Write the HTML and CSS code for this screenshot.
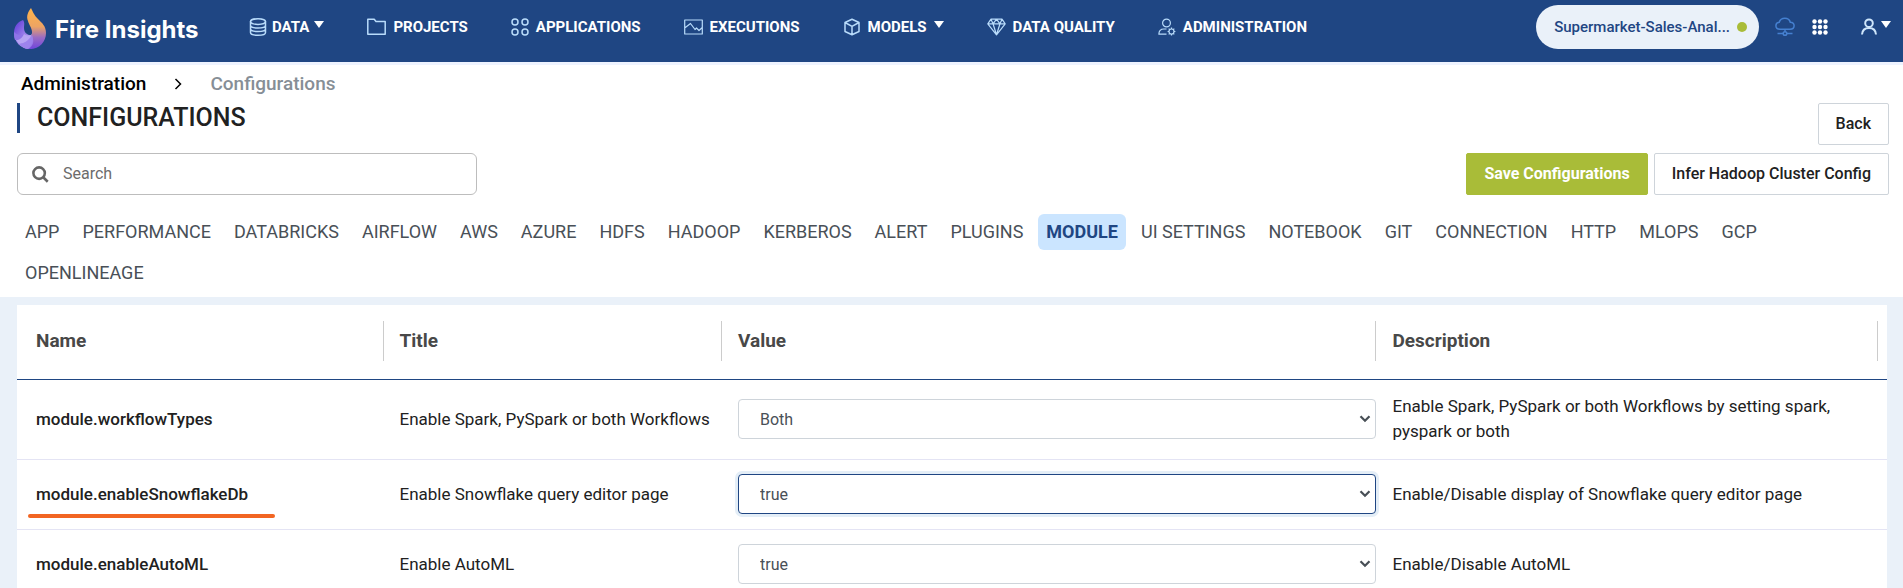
FILE: index.html
```html
<!DOCTYPE html>
<html lang="en">
<head>
<meta charset="utf-8">
<title>Fire Insights - Configurations</title>
<link rel="stylesheet" href="styles.css">
</head>
<body>
<header class="topbar">
  <a class="brand" href="#">
    <svg class="brand-logo" width="34" height="42" viewBox="0 0 34 42" aria-hidden="true">
      <defs>
        <linearGradient id="flame" x1="0" y1="0" x2="0" y2="1">
          <stop offset="0" stop-color="#ffb44a"/>
          <stop offset=".45" stop-color="#eda463"/>
          <stop offset=".72" stop-color="#9a6bc4"/>
          <stop offset="1" stop-color="#6f45dc"/>
        </linearGradient>
        <linearGradient id="swirl" x1="0" y1="0" x2="1" y2="1">
          <stop offset="0" stop-color="#5a35d8"/>
          <stop offset=".6" stop-color="#a98fee"/>
          <stop offset="1" stop-color="#8d6be6"/>
        </linearGradient>
      </defs>
      <path d="M10 12C4 14 1 19 1 25c0 9 7 16 16 16 3 0 5-3 5-9l-2-5c-5 1-9-2-9-7 0-3 1-5-1-8z" fill="url(#swirl)"/>
      <path d="M18 0c-3 4-5 8-3 13 1 4 4 7 4 11 0 1 0 2-1 3l2 4c1 4-1 8-5 10 11 1 18-7 18-16 0-7-4-10-8-14-4-4-5-7-7-11z" fill="url(#flame)"/>
      <path d="M1 24c3 3 6 4 10 2-2 4-5 6-9 6-1-2-1-5-1-8z" fill="#8f74e8"/>
      <path d="M11 26c3 2 6 2 8 0-2 5-6 9-13 10l-3-4c4 0 6-2 8-6z" fill="#b7a4f3"/>
      <path d="M19 27c2 4 0 10-4 14-3 0-6-2-9-5 7-1 11-4 13-9z" fill="#9d83ec"/>
    </svg>
    <span class="brand-name">Fire Insights</span>
  </a>
  <nav class="nav" aria-label="Main">
    <a class="nav-item snug" href="#">
      <svg class="nav-icon" width="18" height="18" viewBox="0 0 18 18"><ellipse cx="9" cy="3.6" rx="7.5" ry="2.8"/><path d="M1.500 3.600v10.800c0 1.600 3.400 2.800 7.500 2.800s7.500-1.200 7.500-2.800V3.600M1.500 7.200c0 1.600 3.400 2.800 7.500 2.800s7.500-1.200 7.500-2.800M1.500 10.800c0 1.600 3.400 2.800 7.500 2.800s7.500-1.200 7.500-2.800"/></svg>
      <span>DATA</span><span class="caret"></span>
    </a>
    <a class="nav-item" href="#">
      <svg class="nav-icon" width="19" height="18" viewBox="0 0 19 18"><path d="M.8 16.200V1.200h6.400l1.800 2.300h9.200v12.700z"/></svg>
      <span>PROJECTS</span>
    </a>
    <a class="nav-item" href="#">
      <svg class="nav-icon" width="18" height="18" viewBox="0 0 18 18"><circle cx="4" cy="4" r="3"/><circle cx="14" cy="4" r="3"/><circle cx="4" cy="14" r="3"/><circle cx="14" cy="14" r="3"/></svg>
      <span>APPLICATIONS</span>
    </a>
    <a class="nav-item" href="#">
      <svg class="nav-icon thin" width="19" height="16" viewBox="0 0 19 16"><path d="M.7 1h17.600v14H.7zM.7 9l5.800-4.500 4.500 6 1.500-1.500 2.500 2.500 3.300-3"/></svg>
      <span>EXECUTIONS</span>
    </a>
    <a class="nav-item" href="#">
      <svg class="nav-icon" width="18" height="18" viewBox="0 0 18 18"><path d="M9 1.200l7 3.300v9L9 16.800l-7-3.300v-9zM2 4.500l7 3.800 7-3.800M9 8.300v8.500"/></svg>
      <span>MODELS</span><span class="caret"></span>
    </a>
    <a class="nav-item" href="#">
      <svg class="nav-icon thin" width="19" height="18" viewBox="0 0 19 18"><path d="M4 1.200h11l3.200 4.600-8.700 11L.8 5.800zM.8 5.800h17.400M6 5.800l3.500 11 3.500-11-3.500-4.600zM4 1.200l2 4.600M15 1.200l-2 4.600"/></svg>
      <span>DATA QUALITY</span>
    </a>
    <a class="nav-item" href="#">
      <svg class="nav-icon thin" width="18" height="18" viewBox="0 0 18 18"><circle cx="8.500" cy="5" r="3.900"/><path d="M8.500 16.200H.9c0-3 1.500-5.200 5-5.200h2.600"/><circle cx="13.500" cy="13.500" r="2.500"/><path d="M13.500 9.600V11M13.500 16v1.400M9.600 13.500H11M16 13.500h1.400M10.700 10.700l1 1M15.300 15.300l1 1M16.300 10.700l-1 1M11.700 15.300l-1 1"/></svg>
      <span>ADMINISTRATION</span>
    </a>
  </nav>
  <div class="tools">
    <button class="project" type="button"><span>Supermarket-Sales-Anal...</span><span class="status"></span></button>
    <button class="tool cloud" type="button" aria-label="Connection">
      <svg width="20" height="20" viewBox="0 0 20 20"><path d="M5 12.200C2.500 12.200.9 10.700.9 8.700c0-2 1.500-3.300 3.300-3.500C5 2.700 7.100 1.200 9.800 1.200c2.800 0 4.900 1.600 5.500 4 2.200.1 3.800 1.500 3.800 3.500s-1.600 3.500-4.100 3.500zM10 12.200v2.600M2.500 16.500h5.800M11.700 16.500h5.800"/><circle cx="10" cy="16.500" r="1.800"/></svg>
    </button>
    <button class="tool grid" type="button" aria-label="Apps">
      <svg width="16" height="16" viewBox="0 0 16 16"><circle cx="2.500" cy="2.500" r="2.200"/><circle cx="8" cy="2.500" r="2.200"/><circle cx="13.500" cy="2.500" r="2.200"/><circle cx="2.500" cy="8" r="2.200"/><circle cx="8" cy="8" r="2.200"/><circle cx="13.500" cy="8" r="2.200"/><circle cx="2.500" cy="13.500" r="2.200"/><circle cx="8" cy="13.500" r="2.200"/><circle cx="13.500" cy="13.500" r="2.200"/></svg>
    </button>
    <button class="tool user" type="button" aria-label="Account">
      <svg width="16" height="18" viewBox="0 0 16 18"><circle cx="8" cy="5.200" r="3.800"/><path d="M1 16.500c.3-4.200 3-6.500 7-6.500s6.700 2.300 7 6.500"/></svg>
      <span class="caret"></span>
    </button>
  </div>
</header>

<main class="page">
  <section class="head">
    <nav class="crumbs" aria-label="Breadcrumb">
      <a href="#">Administration</a>
      <svg width="8" height="12" viewBox="0 0 8 12" aria-hidden="true"><path d="M1.500 1l5 5-5 5"/></svg>
      <span>Configurations</span>
    </nav>
    <div class="title-row">
      <h1>CONFIGURATIONS</h1>
      <button class="btn" type="button">Back</button>
    </div>
    <div class="action-row">
      <label class="search">
        <svg width="17" height="17" viewBox="0 0 16 16" aria-hidden="true"><circle cx="6.700" cy="6.700" r="5.400"/><path d="M10.800 10.800l4 4"/></svg>
        <input type="search" placeholder="Search" aria-label="Search">
      </label>
      <div class="actions">
        <button class="btn primary" type="button">Save Configurations</button>
        <button class="btn" type="button">Infer Hadoop Cluster Config</button>
      </div>
    </div>
    <nav class="tabs" aria-label="Configuration groups">
      <a href="#">APP</a><a href="#">PERFORMANCE</a><a href="#">DATABRICKS</a><a href="#">AIRFLOW</a><a href="#">AWS</a><a href="#">AZURE</a><a href="#">HDFS</a><a href="#">HADOOP</a><a href="#">KERBEROS</a><a href="#">ALERT</a><a href="#">PLUGINS</a><a class="active" href="#" aria-current="page">MODULE</a><a href="#">UI SETTINGS</a><a href="#">NOTEBOOK</a><a href="#">GIT</a><a href="#">CONNECTION</a><a href="#">HTTP</a><a href="#">MLOPS</a><a href="#">GCP</a><a href="#">OPENLINEAGE</a>
    </nav>
  </section>

  <section class="content">
    <table class="config">
      <colgroup><col class="c-name"><col class="c-title"><col class="c-value"><col class="c-desc"></colgroup>
      <thead>
        <tr><th scope="col"><span>Name</span></th><th scope="col"><span>Title</span></th><th scope="col"><span>Value</span></th><th scope="col"><span>Description</span></th></tr>
      </thead>
      <tbody>
        <tr>
          <td><label for="wf">module.workflowTypes</label></td>
          <td>Enable Spark, PySpark or both Workflows</td>
          <td><select id="wf"><option>Both</option><option>Spark</option><option>PySpark</option></select></td>
          <td>Enable Spark, PySpark or both Workflows by setting spark, pyspark or both</td>
        </tr>
        <tr>
          <td><label class="marked" for="sf">module.enableSnowflakeDb</label></td>
          <td>Enable Snowflake query editor page</td>
          <td><select class="focused" id="sf"><option>true</option><option>false</option></select></td>
          <td>Enable/Disable display of Snowflake query editor page</td>
        </tr>
        <tr>
          <td><label for="ml">module.enableAutoML</label></td>
          <td>Enable AutoML</td>
          <td><select id="ml"><option>true</option><option>false</option></select></td>
          <td>Enable/Disable AutoML</td>
        </tr>
      </tbody>
    </table>
  </section>
</main>
</body>
</html>
```
FILE: styles.css
```css
* { box-sizing: border-box; }

body {
  margin: 0;
  height: 100vh;
  overflow: hidden;
  display: flex;
  flex-direction: column;
  font-family: Roboto, "Liberation Sans", sans-serif;
  font-size: 16px;
  line-height: 24px;
  color: #212121;
  background: #eaf1f9;
}

a { color: inherit; text-decoration: none; }
button, input, select { font: inherit; }
svg { flex: none; display: block; }

/* Top bar */
.topbar {
  flex: none;
  display: flex;
  align-items: flex-start;
  height: 65px;
  padding: 5px 12px 0 13px;
  background: #1f4683;
  border-bottom: 3px solid #eef3ff;
}

.brand {
  display: flex;
  align-items: center;
  gap: 8px;
  width: 236px;
  padding-top: 3px;
  color: #fff;
  font-family: Inter, sans-serif;
  font-size: 24px;
  font-weight: 700;
  white-space: nowrap;
}
.brand-name { padding-top: 2px; }

.nav { display: flex; gap: 43px; }

.nav-item {
  display: flex;
  align-items: center;
  gap: 7px;
  height: 44px;
  color: #fff;
  font-size: 15px;
  font-weight: 700;
  white-space: nowrap;
}
.nav-item.snug { gap: 5px; }

.nav-icon {
  fill: none;
  stroke: #b9dcfb;
  stroke-width: 1.5;
  stroke-linejoin: round;
}
.nav-icon.thin { stroke-width: 1.2; }

.caret {
  border: 5px solid transparent;
  border-top: 7px solid #fff;
  border-bottom: 0;
  margin-bottom: 6px;
}

.tools { display: flex; align-items: center; margin-left: auto; }

.project {
  display: flex;
  align-items: center;
  gap: 7px;
  height: 44px;
  padding: 0 12px 0 18px;
  border: 0;
  border-radius: 22px;
  background: #eaf1f9;
  color: #1f4683;
  font-size: 15px;
  font-weight: 500;
}
.status { width: 10px; height: 10px; border-radius: 50%; background: #a9bc38; }

.tool {
  display: flex;
  align-items: center;
  gap: 4px;
  padding: 0;
  border: 0;
  background: none;
  fill: none;
  stroke: #cfe6fb;
  stroke-width: 2;
}
.cloud { margin-left: 16px; stroke: #4580d0; stroke-width: 1.5; }
.grid { margin-left: 17px; fill: #fff; stroke: none; }
.user { margin-left: 33px; }

/* Page heading */
.page { flex: 1; min-height: 0; }
.head { padding: 8px 14px 0 17px; background: #fff; }

.crumbs {
  display: flex;
  align-items: center;
  gap: 28px;
  padding-left: 4px;
  height: 22px;
  font-size: 19px;
  font-weight: 500;
  color: #000;
}
.crumbs span { color: #868e96; }
.crumbs svg { fill: none; stroke: #000; stroke-width: 1.5; }

.title-row {
  display: flex;
  justify-content: space-between;
  align-items: flex-start;
  margin-top: 8px;
}
h1 {
  margin: 0;
  padding-left: 17px;
  border-left: 3px solid #1f4683;
  font-size: 25px;
  line-height: 30px;
  font-weight: 500;
}

.btn {
  height: 42px;
  padding: 0 17px;
  border: 1px solid #ced4da;
  border-radius: 2px;
  background: #fff;
  color: #212121;
  font-weight: 500;
  white-space: nowrap;
}
.btn.primary { background: #a9bc38; border-color: #a9bc38; color: #fff; font-weight: 700; }

.action-row { display: flex; justify-content: space-between; margin-top: 8px; }
.actions { display: flex; gap: 6px; }

.search {
  display: flex;
  align-items: center;
  gap: 14px;
  width: 460px;
  height: 42px;
  padding: 0 14px;
  border: 1px solid #bdbdbd;
  border-radius: 6px;
}
.search svg { fill: none; stroke: #666; stroke-width: 2.4; }
.search input { flex: 1; min-width: 0; padding: 0; border: 0; outline: 0; background: none; color: #212121; }
.search input::placeholder { color: #6c6c6c; opacity: 1; }

/* Tabs */
.tabs {
  display: flex;
  flex-wrap: wrap;
  gap: 5px 7px;
  padding: 19px 80px 6px 0;
  font-size: 18px;
  color: #495057;
}
.tabs a { padding: 6px 8px; border-radius: 6px; white-space: nowrap; }
.tabs .active { background: #cbe5ff; color: #1f4683; font-weight: 700; }

/* Configuration table */
.content { padding: 8px 16px 0 17px; }

.config {
  width: 100%;
  table-layout: fixed;
  border-collapse: separate;
  border-spacing: 0;
  background: #fff;
}
.c-name { width: 19.6%; }
.c-title { width: 18.1%; }
.c-value { width: 35%; }

.config th {
  padding: 16px 0 18px;
  border-bottom: 1px solid #1f4683;
  text-align: left;
  font-size: 19px;
  font-weight: 700;
  color: #484848;
}
.config th span {
  display: block;
  padding-left: 16px;
  line-height: 40px;
  border-right: 1px solid #ccc;
}
.config th:first-child span { padding-left: 19px; }
.config th:last-child { padding-right: 9px; }

.config td {
  padding: 14px 0 15px 16px;
  border-bottom: 1px solid #e4e4f4;
  font-size: 17px;
  line-height: 25px;
}
.config td:first-child { padding-left: 19px; font-weight: 500; }
.config td:last-child { padding-right: 24px; }

.marked { position: relative; }
.marked::after {
  content: "";
  position: absolute;
  left: -8px;
  right: -27px;
  top: 30px;
  height: 4px;
  border-radius: 2px;
  background: #f26522;
}

.config select {
  display: block;
  appearance: none;
  width: 100%;
  height: 40px;
  padding: 0 21px;
  border: 1px solid #ced4da;
  border-radius: 4px;
  background: #fff url("data:image/svg+xml,%3Csvg xmlns='http://www.w3.org/2000/svg' width='12' height='8' viewBox='0 0 12 8'%3E%3Cpath d='M1.500 1.200L6 5.800l4.500-4.600' fill='none' stroke='%23495057' stroke-width='2.200'/%3E%3C/svg%3E") no-repeat right 4px center;
  color: #495057;
  font-size: 16px;
}
.config select.focused { border-color: #1f4683; box-shadow: 0 0 0 3px #e4eef7; }
```
